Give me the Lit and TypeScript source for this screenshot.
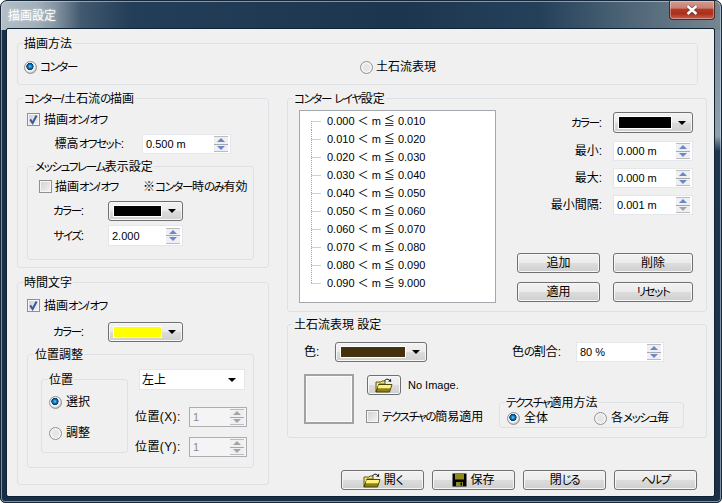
import { LitElement, html, css, svg } from "lit";
import { customElement } from "lit/decorators.js";

const ROWS = [
  ["0.000", "0.010"], ["0.010", "0.020"], ["0.020", "0.030"], ["0.030", "0.040"], ["0.040", "0.050"],
  ["0.050", "0.060"], ["0.060", "0.070"], ["0.070", "0.080"], ["0.080", "0.090"], ["0.090", "9.000"],
];

/** Wraps kana runs so they can be set narrower than kanji, as the proportional UI font does. */
const tx = (s: string) =>
  s.split(/([\u3040-\u30ff]+)/).map((p, i) => (i % 2 ? html`<span class="k">${p}</span>` : p));

@customElement("app-root")
export class AppRoot extends LitElement {
  static styles = css`
    :host { display: block; width: 722px; height: 503px; background: #fff; overflow: hidden;
      font: 12px/14px "Liberation Sans", "Noto Sans CJK JP", sans-serif; font-feature-settings: "palt"; color: #000; }
    * { box-sizing: border-box; }
    .k { font-size: 11.5px; letter-spacing: -1.4px; }
    .win { width: 722px; height: 503px; display: flex; flex-direction: column; border-radius: 7px 7px 5px 5px;
      border: 1px solid #16283a; box-shadow: inset 0 0 0 1px rgba(210,225,235,.55);
      background:
        linear-gradient(90deg, #b3bec5 0, #a2b0ba 35px, #8394a1 55px, #42596f 80px, #233e58 130px, #1d3650 400px, #25415a 540px, #4f6678 630px, #75868f 720px) top / 100% 29px no-repeat,
        linear-gradient(180deg, #77899a 0, #8fa0ac 135px, #1d3650 150px, #1b3047 100%) right / 8px 100% no-repeat,
        #17304a; }
    .bar { height: 28px; flex: none; display: flex; align-items: flex-start; justify-content: space-between; padding: 0 7px 0 7px; }
    .cap { color: #fff; margin-top: 8px; text-shadow: 0 0 3px rgba(255,255,255,.7); }
    .close { width: 46px; height: 19px; margin-right: -1px; border: 1px solid #4c2a28; border-top: 0; border-radius: 0 0 4px 4px;
      box-shadow: inset 0 0 0 1px rgba(255,255,255,.35);
      background: linear-gradient(180deg, #d69a90 0, #c77f74 40%, #b33a24 45%, #a9301c 70%, #c7604e 100%);
      display: flex; align-items: center; justify-content: center; }
    .client { width: 707px; height: 467px; margin-left: 6px; background: #f0f0f0; border: 1px solid #eef2f5;
      outline: 1px solid #0f2233; border-radius: 1px; padding: 13px 0 0 9px; }

    .gb { border: 1px solid #dde1e6; border-radius: 3px; flex: none; }
    .t { display: block; width: fit-content; height: 14px; line-height: 16px; margin: -8px 0 0 5px; padding: 0 1px; background: #f0f0f0; white-space: nowrap; }

    .row { display: flex; align-items: center; flex: none; }
    .rad { width: 13px; height: 13px; flex: none; border-radius: 50%; border: 1px solid #8e9398;
      background: radial-gradient(circle at 50% 50%, #e6e6e6 0 3px, #f7f7f7 5px, #dcdcdc 6px); }
    .rad.on { background: radial-gradient(circle at 45% 40%, #6fd0ff 0, #0a6fb5 2px, #07395f 3.4px, #e9e9e9 3.8px, #f7f7f7 5px, #c8c8c8 6px); }
    .chk { width: 13px; height: 13px; flex: none; border: 1px solid #8e8f8f; box-shadow: inset 0 0 0 1px #f6f6f6;
      background: linear-gradient(135deg, #d0d0d0, #f4f4f4); display: block; }
    .chk svg { display: block; }
    .lr { display: flex; align-items: center; gap: 3px; white-space: nowrap; }
    .lc { gap: 4px; }
    .lab { text-align: right; white-space: nowrap; flex: none; }

    .cbtn { height: 20px; border: 1px solid #707070; border-radius: 3px; flex: none; display: flex; padding: 3px 0 3px 4px;
      box-shadow: inset 0 0 0 1px #f7f7f7; background: linear-gradient(180deg, #f2f2f2 0, #ebebeb 48%, #dcdcdc 52%, #cfcfcf 100%); }
    .cbtn .sw { flex: 1; border: 1px solid #fff; }
    .cbtn .ar { width: 20px; display: flex; align-items: center; justify-content: center; }
    .tri { width: 0; height: 0; border-left: 4px solid transparent; border-right: 4px solid transparent; border-top: 4px solid #000; }

    .spin { height: 20px; flex: none; background: #fff; border: 1px solid #e3e6ea; display: flex; align-items: center;
      justify-content: space-between; padding: 0 2px 0 3px; font-size: 11px; }
    .spin.off { border-color: #abadb3; background: #f4f4f4; color: #8a8a8a; }
    .sb { width: 14px; height: 16px; flex: none; display: flex; flex-direction: column; border: 1px solid #bcbcbc; border-width: 1px 0; background: #e6e8ec; }
    .sb span { flex: 1; display: flex; align-items: center; justify-content: center; background: #eef0f3; }
    .sb span + span { border-top: 1px solid #a8a8a8; }
    .up, .dn { width: 0; height: 0; border-left: 4px solid transparent; border-right: 4px solid transparent; }
    .up { border-bottom: 4px solid #6a88c8; }
    .dn { border-top: 4px solid #6a88c8; }
    .g .up { border-bottom-color: #a4a4a4; }
    .g .dn { border-top-color: #a4a4a4; }
    .d-dn .dn { border-top-color: #a4a4a4; }

    .btn { height: 20px; border: 1px solid #707070; border-radius: 3px; flex: none; display: flex; align-items: center; justify-content: center; gap: 3px;
      box-shadow: inset 0 0 0 1px #f7f7f7; background: linear-gradient(180deg, #f2f2f2 0, #ebebeb 48%, #dcdcdc 52%, #cfcfcf 100%); }
    .b83 { width: 83px; }
    .btn svg { display: block; flex: none; }

    /* method group */
    .g-method { width: 681px; height: 42px; }
    .g-method .row { margin: 7px 0 0 6px; height: 20px; }
    .m1 { width: 336px; }

    .cols { display: flex; gap: 18px; margin-top: 13px; align-items: flex-start; }
    .left, .right { display: flex; flex-direction: column; flex: none; }
    .left { width: 252px; gap: 14px; }
    .right { width: 420px; gap: 12px; }

    /* left A */
    .g-draw { height: 170px; padding-left: 9px; }
    .g-draw .t, .g-time .t { margin-left: -4px; }
    .sub .t { margin-left: 6px !important; }
    .c1 { margin-top: 8px; height: 13px; }
    .off-row { margin-top: 8px; height: 20px; }
    .off-row .lab { width: 97px; margin-right: 18px; }
    .w89 { width: 89px; }
    .sub { width: 227px; }
    .s-mesh { height: 94px; margin-top: 12px; }
    .s-mesh .c2 { margin: 7px 0 0 11px; height: 13px; white-space: nowrap; }
    .nl { width: 88px; }
    .s-mesh .f1 { margin-top: 8px; height: 20px; }
    .s-mesh .f2 { margin-top: 4px; height: 21px; }
    .s-mesh .lab { width: 56px; margin-right: 24px; }
    .w75 { width: 75px; }
    .s-mesh .f2 .spin { height: 21px; }

    /* left B */
    .g-time { height: 203px; padding-left: 9px; }
    .g-time .c1 { margin-top: 10px; }
    .tc { margin-top: 10px; height: 20px; }
    .tc .lab { width: 57px; margin-right: 24px; }
    .s-pos { height: 114px; margin-top: 12px; display: flex; flex-direction: column; }
    .pos-body { display: flex; }
    .g-pp { width: 87px; height: 74px; margin: 18px 0 0 13px; padding-left: 7px; }
    .g-pp .t { margin-left: -1px !important; }
    .g-pp .p1 { margin-top: 9px; }
    .g-pp .p2 { margin-top: 17px; }
    .pr { margin-left: 7px; display: flex; flex-direction: column; }
    .combo { width: 106px; height: 21px; margin: 8px 0 0 4px; background: #fff; border: 1px solid #e3e6ea; display: flex; align-items: center; justify-content: space-between; padding: 0 8px 0 2px; }
    .pos-x { margin-top: 17px; }
    .pos-y { margin-top: 10px; }
    .pos-x .lab, .pos-y .lab { width: 54px; text-align: left; letter-spacing: .4px; }
    .w58 { width: 58px; }

    /* layer */
    .g-layer { height: 214px; }
    .layer-body { display: flex; }
    .list { width: 197px; height: 193px; margin: 5px 0 0 11px; border: 1px solid #a5a9ae; background: #fff; padding: 1px 0 0 11px; list-style: none; flex: none; }
    .list li { height: 18px; display: flex; align-items: center; font-size: 11px; white-space: nowrap; font-feature-settings: normal; }
    .list svg { display: block; flex: none; }
    .ctl { width: 197px; flex: none; display: flex; flex-direction: column; }
    .ctl .lab { width: 106px; margin-right: 11px; }
    .ctl .k1 { margin-top: 7px; height: 21px; }
    .ctl .k1 .cbtn { height: 21px; width: 80px; }
    .ctl .k2 { margin-top: 8px; height: 20px; }
    .ctl .k3 { margin-top: 7px; height: 20px; }
    .w80 { width: 80px; }
    .bb { margin: 38px 0 0 21px; display: grid; grid-template-columns: 83px 80px; column-gap: 13px; row-gap: 9px; }

    /* debris */
    .g-deb { height: 114px; }
    .d1 { margin: 11px 0 0 16px; height: 20px; }
    .d1 .l1 { width: 31px; text-align: left; }
    .w92 { width: 92px; }
    .d1 .l2 { width: 64px; margin-left: 85px; text-align: left; }
    .w88 { width: 88px; }
    .d2 { display: flex; margin: 12px 0 0 16px; }
    .prev { width: 50px; height: 50px; flex: none; border: 2px solid #a2a2a2; box-shadow: 0 0 0 1px #fbfbfb inset; background: #f0f0f0; }
    .dc { width: 133px; margin-left: 12px; display: flex; flex-direction: column; flex: none; }
    .oi { margin: 1px 0 0 1px; height: 20px; }
    .ob { width: 34px; }
    .ni { margin-left: 7px; white-space: nowrap; font-size: 11px; }
    .c3 { margin-top: 15px; height: 13px; }
    .g-tex { width: 185px; height: 26px; margin-top: 28px; }
    .g-tex .row { margin: 2px 0 0 7px; }
    .tx { width: 87px; }

    .foot { display: flex; gap: 8px; margin: 20px 0 0 54px; }
  `;

  private rad(on: boolean) { return html`<span class="rad ${on ? "on" : ""}"></span>`; }
  private chk(on: boolean) {
    return html`<span class="chk">${on ? html`<svg width="11" height="11" viewBox="0 0 11 11"><path d="M2.2 5.4 L4.6 9 L8.6 1.6" fill="none" stroke="#3d5a9e" stroke-width="2.1"/></svg>` : ""}</span>`;
  }
  private cbtn(color: string, cls: string) {
    return html`<span class="cbtn ${cls}"><span class="sw" style="background:${color}"></span><span class="ar"><span class="tri"></span></span></span>`;
  }
  private spin(v: string, cls: string, extra = "") {
    return html`<span class="spin ${cls}"><span>${v}</span><span class="sb ${extra}"><span><i class="up"></i></span><span><i class="dn"></i></span></span></span>`;
  }
  private folder() {
    return html`<svg width="18" height="15" viewBox="0 0 18 15">
      <path d="M1 4 H6 L7 3 H10 V6 H4 L1 14 Z" fill="#f3e878" stroke="#4f4a10" stroke-width=".9"/>
      <path d="M4 6.5 H17 L14.5 14 H1 Z" fill="#8f8014" stroke="#3f3a08" stroke-width=".9"/>
      <path d="M3.6 7 H16.4 L15.2 10.2 H2.6 Z" fill="#fff27c"/>
      <path d="M9.5 3 C10.5 .8 13 .6 14.6 2.2" fill="none" stroke="#111" stroke-width="1"/>
      <path d="M13 3.4 L16.2 3.8 L16 .8 Z" fill="#111"/>
    </svg>`;
  }
  private floppy() {
    return html`<svg width="15" height="14" viewBox="0 0 15 14">
      <path d="M.5.5 H14.5 V13.5 H.5 Z" fill="#000"/>
      <path d="M3 1 H12 V6.5 H3 Z" fill="#8d8a1e"/>
      <path d="M4 9 H11 V13 H4 Z" fill="#8d8a1e"/>
      <path d="M8.5 9.5 H10 V12.5 H8.5 Z" fill="#000"/>
    </svg>`;
  }

  render() {
    return html`
      <div class="win">
        <div class="bar">
          <span class="cap">描画設定</span>
          <span class="close"><svg width="14" height="10" viewBox="0 0 14 10"><path d="M2.5 1 L11.5 9 M11.5 1 L2.5 9" stroke="#5a3a38" stroke-width="3.6"/><path d="M2.5 1 L11.5 9 M11.5 1 L2.5 9" stroke="#fff" stroke-width="2.4"/></svg></span>
        </div>
        <div class="client">
          <div class="gb g-method">
            <span class="t">描画方法</span>
            <div class="row">
              <span class="lr m1">${this.rad(true)}<span>${tx("コンター")}</span></span>
              <span class="lr">${this.rad(false)}<span>土石流表現</span></span>
            </div>
          </div>
          <div class="cols">
            <div class="left">
              <div class="gb g-draw">
                <span class="t">${tx("コンター/土石流の描画")}</span>
                <div class="row c1"><span class="lr lc">${this.chk(true)}<span>${tx("描画オン/オフ")}</span></span></div>
                <div class="row off-row"><span class="lab">${tx("標高オフセット:")}</span>${this.spin("0.500 m", "w89")}</div>
                <div class="gb sub s-mesh">
                  <span class="t">${tx("メッシュフレーム表示設定")}</span>
                  <div class="row c2"><span class="lr">${this.chk(false)}<span class="nl">${tx("描画オン/オフ")}</span></span><span>${tx("※コンター時のみ有効")}</span></div>
                  <div class="row f1"><span class="lab">${tx("カラー:")}</span>${this.cbtn("#000", "w75")}</div>
                  <div class="row f2"><span class="lab">${tx("サイズ:")}</span>${this.spin("2.000", "w75")}</div>
                </div>
              </div>
              <div class="gb g-time">
                <span class="t">時間文字</span>
                <div class="row c1"><span class="lr lc">${this.chk(true)}<span>${tx("描画オン/オフ")}</span></span></div>
                <div class="row tc"><span class="lab">${tx("カラー:")}</span>${this.cbtn("#ffff00", "w75")}</div>
                <div class="gb sub s-pos">
                  <span class="t">位置調整</span>
                  <div class="pos-body">
                    <div class="gb g-pp">
                      <span class="t">位置</span>
                      <div class="lr lc p1">${this.rad(true)}<span>選択</span></div>
                      <div class="lr lc p2">${this.rad(false)}<span>調整</span></div>
                    </div>
                    <div class="pr">
                      <div class="combo"><span>左上</span><span class="tri"></span></div>
                      <div class="row pos-x"><span class="lab">位置(X):</span>${this.spin("1", "w58 off", "g")}</div>
                      <div class="row pos-y"><span class="lab">位置(Y):</span>${this.spin("1", "w58 off", "g")}</div>
                    </div>
                  </div>
                </div>
              </div>
            </div>
            <div class="right">
              <div class="gb g-layer">
                <span class="t">${tx("コンター レイヤ設定")}</span>
                <div class="layer-body">
                  <ul class="list">
                    ${ROWS.map(([a, b], i) => html`<li>${svg`<svg width="16" height="18" viewBox="0 0 16 18"><path d="M.5 ${i === 0 ? 9 : 0} V${i === ROWS.length - 1 ? 9 : 18} M.5 9.5 H10" stroke="#a0a0a0" stroke-dasharray="1 1" fill="none"/></svg>`}<span>${a} ＜ m ≦ ${b}</span></li>`)}
                  </ul>
                  <div class="ctl">
                    <div class="row k1"><span class="lab">${tx("カラー:")}</span>${this.cbtn("#000", "")}</div>
                    <div class="row k2"><span class="lab">最小:</span>${this.spin("0.000 m", "w80")}</div>
                    <div class="row k3"><span class="lab">最大:</span>${this.spin("0.000 m", "w80")}</div>
                    <div class="row k3"><span class="lab">最小間隔:</span>${this.spin("0.001 m", "w80", "d-dn")}</div>
                    <div class="bb">
                      <span class="btn">追加</span><span class="btn">削除</span>
                      <span class="btn">適用</span><span class="btn"><span>${tx("リセット")}</span></span>
                    </div>
                  </div>
                </div>
              </div>
              <div class="gb g-deb">
                <span class="t">土石流表現 設定</span>
                <div class="row d1"><span class="lab l1">色:</span>${this.cbtn("#46310f", "w92")}<span class="lab l2">${tx("色の割合:")}</span>${this.spin("80 %", "w88")}</div>
                <div class="d2">
                  <div class="prev"></div>
                  <div class="dc">
                    <div class="row oi"><span class="btn ob">${this.folder()}</span><span class="ni">No Image.</span></div>
                    <div class="row c3"><span class="lr">${this.chk(false)}<span>${tx("テクスチャの簡易適用")}</span></span></div>
                  </div>
                  <div class="gb g-tex">
                    <span class="t">${tx("テクスチャ適用方法")}</span>
                    <div class="row"><span class="lr lc tx">${this.rad(true)}<span>全体</span></span><span class="lr lc">${this.rad(false)}<span>${tx("各メッシュ毎")}</span></span></div>
                  </div>
                </div>
              </div>
              <div class="foot">
                <span class="btn b83">${this.folder()}<span>${tx("開く")}</span></span>
                <span class="btn b83">${this.floppy()}<span>保存</span></span>
                <span class="btn b83"><span>${tx("閉じる")}</span></span>
                <span class="btn b83"><span>${tx("ヘルプ")}</span></span>
              </div>
            </div>
          </div>
        </div>
      </div>
    `;
  }
}
